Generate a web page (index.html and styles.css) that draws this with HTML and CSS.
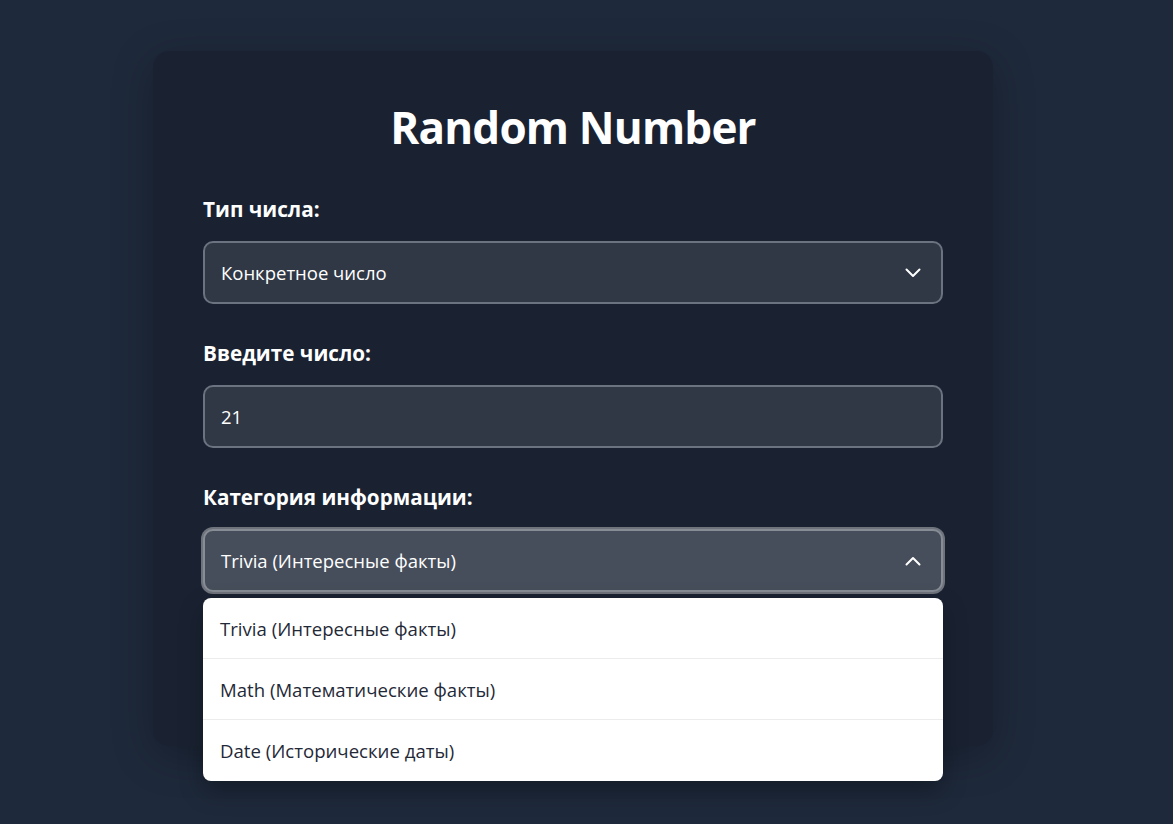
FILE: index.html
```html
<!DOCTYPE html>
<html lang="ru">
<head>
<meta charset="utf-8">
<title>Random Number</title>
<link rel="stylesheet" href="styles.css">
</head>
<body>
<div class="page">
  <main class="card">
    <h1 class="title">Random Number</h1>

    <div class="group">
      <label class="label">Тип числа:</label>
      <div class="control select">
        <span class="value">Конкретное число</span>
        <svg class="chev" width="16" height="10" viewBox="0 0 16 10"><path d="M1.5 1.5 L8 8 L14.5 1.5" fill="none" stroke="#fff" stroke-width="2" stroke-linecap="round" stroke-linejoin="round"/></svg>
      </div>
    </div>

    <div class="group">
      <label class="label" for="num">Введите число:</label>
      <input id="num" class="control input" type="text" value="21">
    </div>

    <div class="group last">
      <label class="label">Категория информации:</label>
      <div class="dd">
        <div class="control select focused">
          <span class="value">Trivia (Интересные факты)</span>
          <svg class="chev" width="16" height="10" viewBox="0 0 16 10"><path d="M1.5 8.5 L8 2 L14.5 8.5" fill="none" stroke="#fff" stroke-width="2" stroke-linecap="round" stroke-linejoin="round"/></svg>
        </div>
        <ul class="menu">
          <li class="item">Trivia (Интересные факты)</li>
          <li class="item">Math (Математические факты)</li>
          <li class="item">Date (Исторические даты)</li>
        </ul>
      </div>
    </div>

    <button class="btn">Получить факт</button>
  </main>
</div>
</body>
</html>
```

FILE: styles.css
```css
* { box-sizing: border-box; }

html, body {
  margin: 0;
  padding: 0;
}

body {
  background: #1e293b;
  font-family: "Open Sans", "Noto Sans", sans-serif;
  color: #fff;
  min-height: 824px;
  overflow: hidden;
}

.page {
  padding: 51px 0 0 153px;
}

.card {
  width: 840px;
  background: #1a2232;
  border-radius: 16px;
  padding: 50px;
  box-shadow: 0 10px 40px rgba(0, 0, 0, 0.25);
}

.title {
  margin: 0 0 43px;
  font-size: 44px;
  line-height: 53px;
  font-weight: 700;
  text-align: center;
  letter-spacing: -0.8px;
}

.group {
  margin-bottom: 37px;
}

.label {
  display: block;
  font-size: 20.7px;
  line-height: 24px;
  font-weight: 700;
  margin-bottom: 20px;
}

.control {
  display: flex;
  align-items: center;
  width: 100%;
  height: 63px;
  padding: 0 20px 0 16px;
  background: #303846;
  border: 2px solid #6b7280;
  border-radius: 10px;
  font-family: inherit;
  font-size: 18.5px;
  color: #fff;
}

.input {
  outline: none;
}

.select .value {
  flex: 1;
}

.chev {
  display: block;
}

.focused {
  background: #464e5b;
  border-color: #878c95;
  box-shadow: 0 0 0 2px #6e737c;
}

.dd {
  position: relative;
}

.menu {
  position: absolute;
  left: 0;
  right: 0;
  top: 69px;
  margin: 0;
  padding: 0;
  list-style: none;
  background: #fff;
  border-radius: 8px;
  box-shadow: 0 10px 25px rgba(0, 0, 0, 0.3);
  z-index: 5;
}

.item {
  height: 61px;
  display: flex;
  align-items: center;
  padding: 0 17px;
  font-size: 18.6px;
  color: #1f2937;
  border-bottom: 1px solid #ececec;
}

.item:last-child {
  border-bottom: none;
}

.btn {
  display: block;
  width: 100%;
  height: 64px;
  margin-top: 40px;
  border: none;
  border-radius: 10px;
  background: #3b82f6;
  color: #fff;
  font-family: inherit;
  font-size: 18px;
  font-weight: 700;
}

.group.last {
  margin-bottom: 0;
}
```
